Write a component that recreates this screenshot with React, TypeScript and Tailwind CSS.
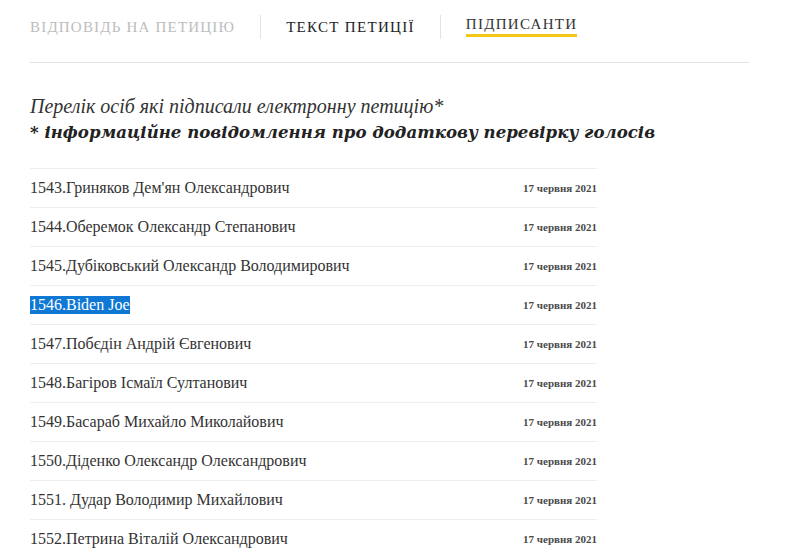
const rows = [
  { n: '1543.', name: "Гриняков Дем'ян Олександрович" },
  { n: '1544.', name: 'Оберемок Олександр Степанович' },
  { n: '1545.', name: 'Дубіковський Олександр Володимирович' },
  { n: '1546.', name: 'Biden Joe', selected: true },
  { n: '1547.', name: 'Побєдін Андрій Євгенович' },
  { n: '1548.', name: 'Багіров Ісмаїл Султанович' },
  { n: '1549.', name: 'Басараб Михайло Миколайович' },
  { n: '1550.', name: 'Діденко Олександр Олександрович' },
  { n: '1551.', name: ' Дудар Володимир Михайлович' },
  { n: '1552.', name: 'Петрина Віталій Олександрович' },
];

export default function App() {
  return (
    <div className="h-[558px] w-[793px] overflow-hidden bg-white font-['Liberation_Serif',serif] text-[#333]">
      <div className="ml-[30px] w-[719px]">
        <div className="flex h-[63px] items-start border-b border-[#e3e3e3] pt-[15px]">
          <div className="flex h-[24px] items-center pr-[25px] text-[15px] tracking-[1.2px] text-[#bdbdbd]">
            ВІДПОВІДЬ НА ПЕТИЦІЮ
          </div>
          <div className="h-[24px] border-l border-[#e3e3e3]" />
          <div className="flex h-[24px] items-center px-[25px] text-[15px] tracking-[1.3px] text-[#222]">
            ТЕКСТ ПЕТИЦІЇ
          </div>
          <div className="h-[24px] border-l border-[#e3e3e3]" />
          <div className="ml-[25px] flex h-[22px] items-center border-b-[3px] border-[#f2c615] text-[15px] tracking-[1.3px] text-[#333]">
            ПІДПИСАНТИ
          </div>
        </div>

        <div className="pt-[30px]">
          <p className="text-[20px] italic leading-[26px] text-[#333]">
            Перелік осіб які підписали електронну петицію*
          </p>
          <p className="font-['DejaVu_Serif',serif] text-[16.6px] font-bold italic leading-[26px] text-[#222]">
            * інформаційне повідомлення про додаткову перевірку голосів
          </p>
        </div>

        <div className="mt-[23px] w-[567px] border-t border-[#eeeeee]">
          {rows.map((r) => (
            <div
              key={r.n}
              className="flex h-[39px] items-center justify-between border-b border-[#eeeeee]"
            >
              <span
                className={
                  r.selected
                    ? 'bg-[#0f78d4] text-[16px] leading-[18px] text-white'
                    : 'text-[16px] leading-[18px] text-[#333]'
                }
              >
                {r.n}
                {r.name}
              </span>
              <span className="text-[11px] font-bold text-[#4a4a4a]">17 червня 2021</span>
            </div>
          ))}
        </div>
      </div>
    </div>
  );
}
